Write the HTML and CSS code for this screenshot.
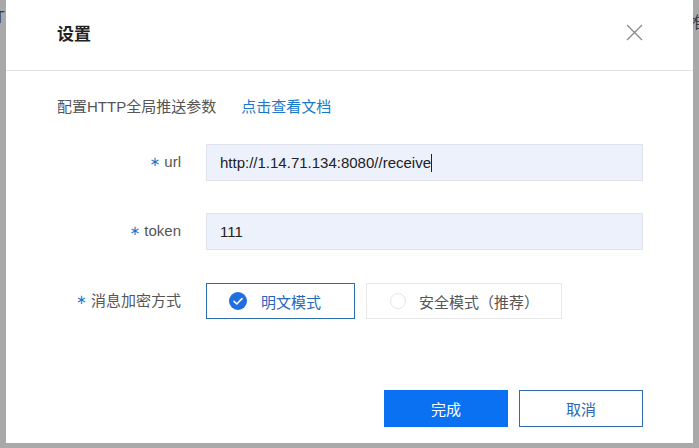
FILE: index.html
```html
<!DOCTYPE html>
<html lang="zh-CN">
<head>
<meta charset="utf-8">
<title>设置</title>
<link rel="stylesheet" href="styles.css">
</head>
<body>
<div class="backdrop">
  <span class="peek peek-left">T</span>
  <span class="peek peek-right">推</span>
</div>
<div class="dialog">
  <div class="dialog-header">
    <div class="dialog-title">设置</div>
    <button class="close-btn" aria-label="关闭">
      <svg width="17" height="17" viewBox="0 0 17 17"><path d="M1 1 L16 16 M16 1 L1 16" stroke="#8a8a8a" stroke-width="1.3" fill="none"/></svg>
    </button>
  </div>
  <div class="dialog-body">
    <div class="desc"><span class="desc-text">配置HTTP全局推送参数</span><a class="doc-link" href="#">点击查看文档</a></div>
    <div class="form">
      <div class="form-row">
        <label class="form-label"><span class="req">∗</span>url</label>
        <div class="input focus">http://1.14.71.134:8080//receive<span class="caret"></span></div>
      </div>
      <div class="form-row">
        <label class="form-label"><span class="req">∗</span>token</label>
        <div class="input">111</div>
      </div>
      <div class="form-row row-radio">
        <label class="form-label"><span class="req">∗</span>消息加密方式</label>
        <div class="radios">
          <div class="radio-box checked">
            <svg class="radio-icon" width="18" height="18" viewBox="0 0 18 18"><circle cx="9" cy="9" r="9" fill="#1f6fe0"/><path d="M5 9.3 L7.8 12 L13 6.6" stroke="#fff" stroke-width="1.6" fill="none" stroke-linecap="round" stroke-linejoin="round"/></svg>
            <span class="radio-text">明文模式</span>
          </div>
          <div class="radio-box">
            <span class="radio-empty"></span>
            <span class="radio-text">安全模式（推荐）</span>
          </div>
        </div>
      </div>
    </div>
  </div>
  <div class="dialog-footer">
    <button class="btn btn-primary">完成</button>
    <button class="btn btn-default">取消</button>
  </div>
</div>
</body>
</html>
```
FILE: styles.css
```css
html, body {
  margin: 0;
  padding: 0;
}
body {
  width: 699px;
  height: 448px;
  background: #a9a9a9;
  font-family: "Liberation Sans", "Noto Sans CJK SC", sans-serif;
  position: relative;
  overflow: hidden;
}
.backdrop {
  position: absolute;
  inset: 0;
}
.peek {
  position: absolute;
  top: 9px;
  font-size: 16px;
  color: #3a3a3a;
  font-family: "Liberation Sans", "Noto Sans CJK SC", sans-serif;
}
.peek-left { left: -5px; }
.peek-right { left: 689px; }
.dialog {
  position: absolute;
  left: 6px;
  top: 0;
  width: 687px;
  height: 443px;
  background: #fff;
  display: flex;
  flex-direction: column;
}
.dialog-header {
  height: 71px;
  border-bottom: 1px solid #e2e2e2;
  display: flex;
  align-items: center;
  justify-content: space-between;
  padding: 0 50px 5px 51px;
  box-sizing: border-box;
}
.dialog-title {
  font-family: "Noto Sans CJK SC", sans-serif;
  font-size: 17px;
  font-weight: 700;
  color: #222;
}
.close-btn {
  background: none;
  border: 0;
  padding: 0;
  width: 17px;
  height: 17px;
  display: flex;
}
.dialog-body {
  padding: 26px 50px 0 51px;
  flex: 1;
}
.desc {
  font-size: 15px;
  line-height: 20px;
  color: #555;
  display: flex;
  gap: 25px;
  font-family: "Liberation Sans", "Noto Sans CJK SC", sans-serif;
}
.doc-link {
  color: #1a78cc;
  text-decoration: none;
}
.form {
  margin-top: 27px;
  display: flex;
  flex-direction: column;
  gap: 32px;
}
.row-radio {
  margin-top: 1px;
}
.form-row {
  display: flex;
  align-items: center;
  gap: 25px;
}
.form-label {
  width: 124px;
  text-align: right;
  font-size: 15px;
  color: #555;
  display: flex;
  justify-content: flex-end;
  align-items: center;
  gap: 4px;
  margin-top: -3px;
}
.req {
  color: #1a78cc;
  font-family: "DejaVu Sans", sans-serif;
  font-size: 13px;
  line-height: 1;
}
.input {
  width: 437px;
  height: 37px;
  box-sizing: border-box;
  background: #edf1fb;
  border: 1px solid #dfe3ec;
  padding: 0 13px;
  display: flex;
  align-items: center;
  font-size: 15px;
  color: #222;
}
.caret {
  display: inline-block;
  width: 1px;
  height: 18px;
  background: #222;
}
.radios {
  display: flex;
  gap: 11px;
}
.radio-box {
  height: 36px;
  box-sizing: border-box;
  border: 1px solid #e8e8e8;
  display: flex;
  align-items: center;
  padding-left: 23px;
  gap: 13px;
  width: 196px;
  font-family: "Noto Sans CJK SC", sans-serif;
  font-size: 15px;
  color: #555;
}
.radio-box.checked {
  width: 149px;
  border-color: #2b6ea8;
  color: #2a66b6;
  padding-left: 22px;
  gap: 14px;
}
.radio-empty {
  width: 16px;
  height: 16px;
  box-sizing: border-box;
  border: 1px solid #e6e6e6;
  border-radius: 50%;
}
.dialog-footer {
  display: flex;
  justify-content: flex-end;
  gap: 11px;
  padding: 0 50px 16px 0;
}
.btn {
  width: 124px;
  height: 37px;
  box-sizing: border-box;
  font-family: "Noto Sans CJK SC", sans-serif;
  font-size: 15px;
  border: 1px solid transparent;
  padding: 0;
}
.btn-primary {
  background: #0a72f2;
  color: #fff;
  border-color: #0a72f2;
}
.btn-default {
  background: #fff;
  color: #2a66b6;
  border-color: #2f6da8;
}
```
